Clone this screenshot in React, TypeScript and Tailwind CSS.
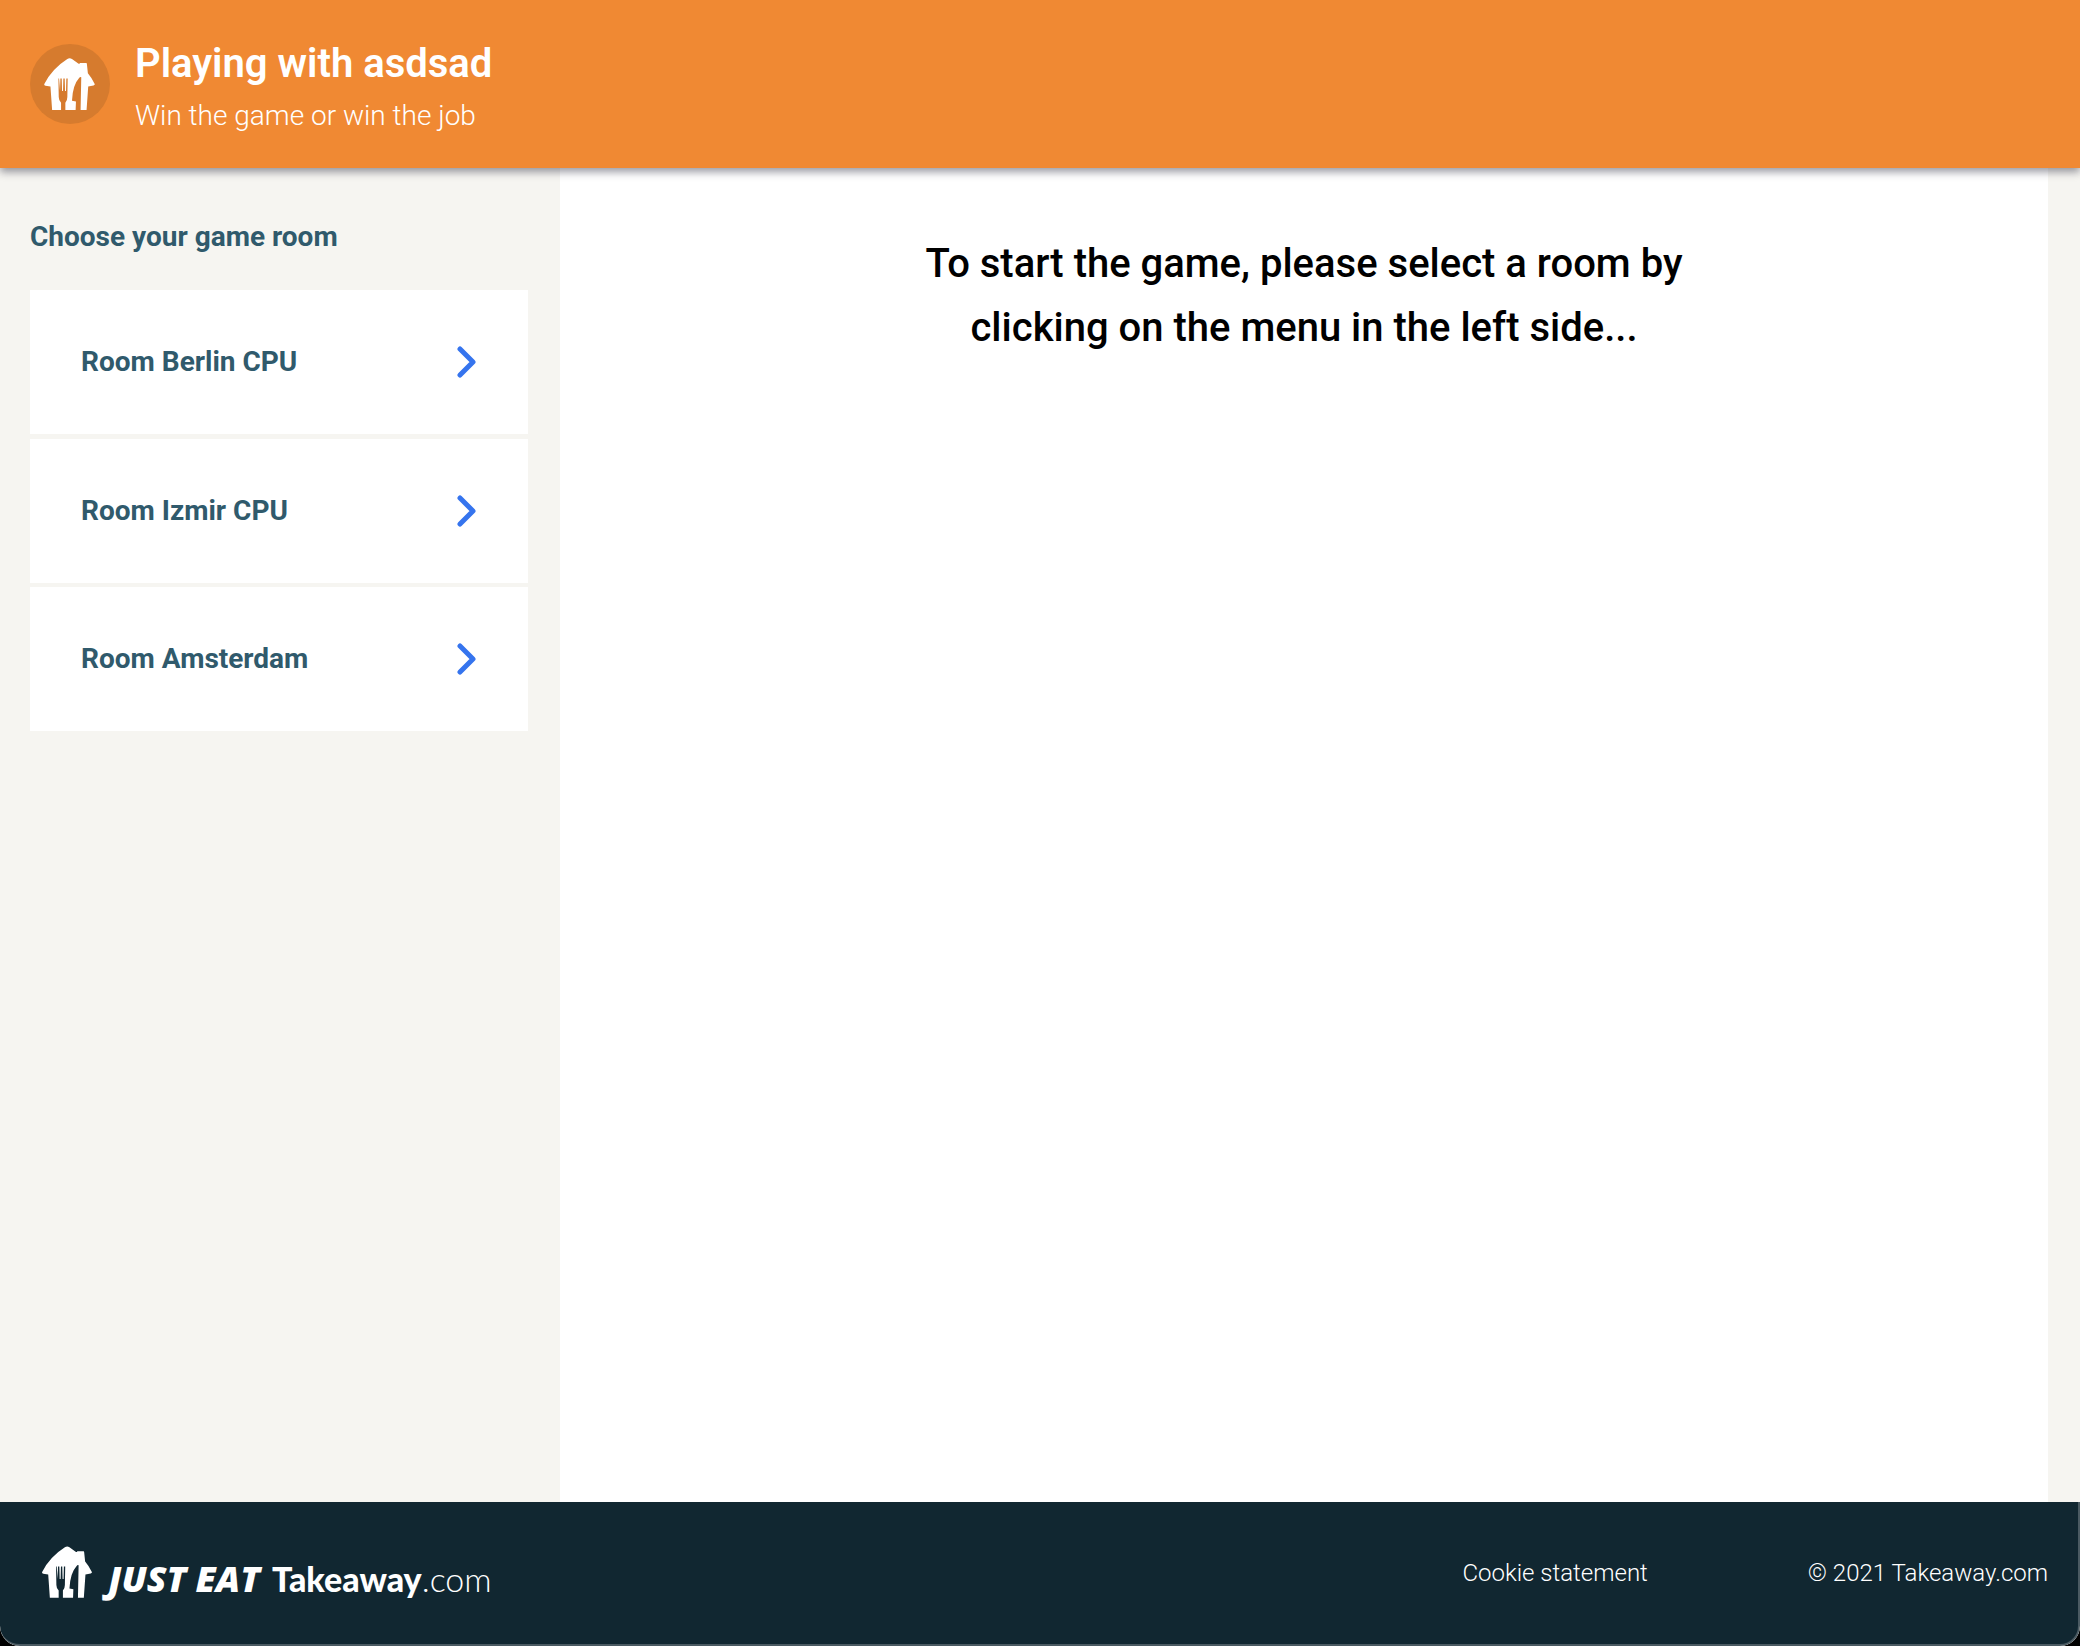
const rooms = ["Room Berlin CPU", "Room Izmir CPU", "Room Amsterdam"];

function HouseLogo({ className }: { className: string }) {
  return (
    <svg viewBox="0 0 153 157" className={className} fill="currentColor" aria-hidden="true">
      <path
        fillRule="evenodd"
        d="M70 3 Q77 -2 84 3 L104 17 L107 17 L108 15 L127 15 Q129 15 129 18 L132 46 Q144 60 153 79 Q152 82 149 83 L133 86 L128 157 L110 157 L112 58 Q109 56 106 60 Q86 82 84 129 L96 131 L95 157 L64 157 L64 135 Q70 128 70 118 L71 62 L67 62 L66 100 L63 100 L62 62 L58 62 L57 100 L54 100 L53 62 L49 62 L48 100 L45 62 L43 62 L44 118 Q44 128 51 135 L51 157 L24 157 L19 86 L4 84 Q0 83 0 79 Q24 32 70 3 Z"
      />
    </svg>
  );
}

function Chevron() {
  return (
    <svg viewBox="0 0 20 34" className="h-[34px] w-5" fill="none" stroke="#3574ee" strokeWidth="5" strokeLinecap="round" strokeLinejoin="round" aria-hidden="true">
      <path d="M3 4 L16 17 L3 30" />
    </svg>
  );
}

export default function App() {
  return (
    <div className="bg-black font-['Roboto',sans-serif]">
      <div className="flex min-h-screen flex-col overflow-hidden rounded-b-[20px] bg-[#f6f5f1]">
        <header className="relative flex h-[168px] items-center gap-[25px] bg-[#f08933] px-[30px] text-white shadow-[0_4px_8px_rgba(30,30,50,0.45)]">
          <div className="flex size-20 shrink-0 items-center justify-center rounded-full bg-[#d67b2e] pr-[2px]">
            <HouseLogo className="h-[52px] w-[51px]" />
          </div>
          <div className="pt-2">
            <h1 className="text-[40px] font-semibold leading-[56px]">Playing with asdsad</h1>
            <p className="text-[28px] font-light leading-[48px]">Win the game or win the job</p>
          </div>
        </header>

        <div className="flex flex-1 pr-8">
          <aside className="w-[560px] shrink-0 pl-[30px] pr-8 pt-12">
            <h2 className="mb-8 text-[28px] font-bold leading-[42px] text-[#305a6c]">Choose your game room</h2>
            <nav className="flex min-h-[441px] flex-col justify-between">
              {rooms.map((room) => (
                <button key={room} type="button" className="flex h-36 items-center justify-between bg-white pl-[51px] pr-[51px] text-left text-[28px] font-bold text-[#305a6c]">
                  {room}
                  <Chevron />
                </button>
              ))}
            </nav>
          </aside>
          <main className="flex flex-1 justify-center bg-white pt-16">
            <p className="w-[800px] text-center text-[40px] font-medium leading-[64px] text-black">
              To start the game, please select a room by clicking on the menu in the left side...
            </p>
          </main>
        </div>

        <footer className="flex h-36 items-center justify-between rounded-b-[20px] border-b-2 border-r-2 border-[#4a5a62] bg-[#112731] pl-[42px] pr-[30px] text-white">
          <div className="flex items-center gap-4 pb-[2px]">
            <HouseLogo className="h-[52px] w-[50px]" />
            <div className="flex items-baseline gap-3 pt-3">
              <span className="font-['Open_Sans',sans-serif] text-4xl font-extrabold italic">JUST EAT</span>
              <span className="font-['Lato',sans-serif] text-[34px]">
                <span className="font-black">Takeaway</span>
                <span className="font-light">.com</span>
              </span>
            </div>
          </div>
          <div className="flex gap-40 text-2xl font-light">
            <a href="#cookies">Cookie statement</a>
            <span>© 2021 Takeaway.com</span>
          </div>
        </footer>
      </div>
    </div>
  );
}
